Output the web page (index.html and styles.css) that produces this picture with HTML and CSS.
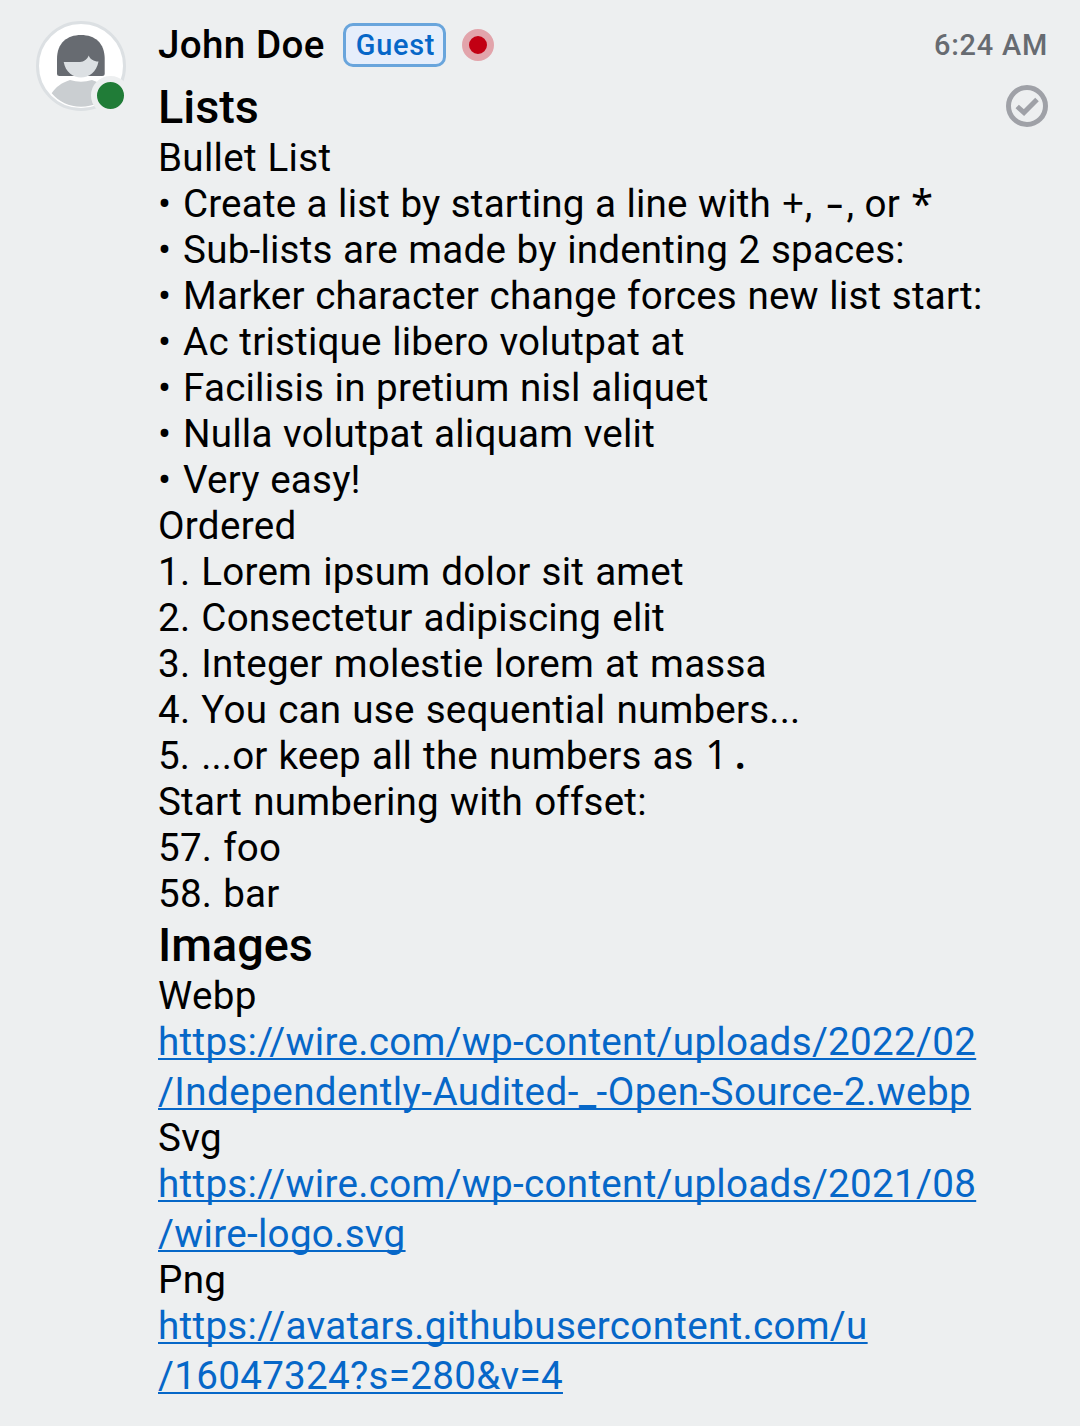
FILE: index.html
```html
<!DOCTYPE html>
<html lang="en">
<head>
<meta charset="utf-8">
<title>Conversation</title>
<link rel="stylesheet" href="styles.css">
</head>
<body>
<article class="message">
  <div class="avatar">
    <svg class="avatar-image" width="90" height="90" viewBox="0 0 90 90">
      <circle cx="45" cy="45" r="43.5" fill="#fff" stroke="#dce0e3" stroke-width="3"/>
      <path d="M15.7 72.3C20 66 25 62 34 59Q45 62.5 56 59C65 62 70 66 74.3 72.3C67 81 57 85.7 45 85.7S23 81 15.7 72.3Z" fill="#caced1"/>
      <path d="M21 52.5V38C21 22 31 14 45 14S68.7 22 68.7 38V52.5Q68.7 55 66.2 55H23.5Q21 55 21 52.5Z" fill="#676b71"/>
      <path d="M27.7 41H44C48 41 51.5 38 52.7 34.5C54 38 57.5 40.5 62.5 40.5C60.5 51 53 56.5 45 56.5S29.5 51 27.7 41Z" fill="#dce0e3"/>
    </svg>
    <span class="presence"></span>
  </div>
  <div class="body">
    <header class="header">
      <span class="name">John Doe</span>
      <span class="guest">Guest</span>
      <span class="hold"></span>
      <time class="time">6:24 AM</time>
    </header>
    <div class="heading-row">
      <h2>Lists</h2>
      <svg class="delivered" width="42" height="42" viewBox="0 0 42 42" fill="none" stroke="#9fa1a7" stroke-width="5"><circle cx="21" cy="21" r="18.5"/><path d="M11.2 21.5L18 27.5L31 14.5"/></svg>
    </div>
    <p>Bullet List</p>
    <p class="item syntax"><span class="bullet">•</span> Create a list by starting a line with <code>+</code>, <code class="dash">-</code>, or <code class="star">*</code></p>
    <p class="item"><span class="bullet">•</span> Sub-lists are made by indenting 2 spaces:</p>
    <p class="item"><span class="bullet">•</span> Marker character change forces new list start:</p>
    <p class="item"><span class="bullet">•</span> Ac tristique libero volutpat at</p>
    <p class="item"><span class="bullet">•</span> Facilisis in pretium nisl aliquet</p>
    <p class="item"><span class="bullet">•</span> Nulla volutpat aliquam velit</p>
    <p class="item"><span class="bullet">•</span> Very easy!</p>
    <p>Ordered</p>
    <p class="step">1. Lorem ipsum dolor sit amet</p>
    <p class="step">2. Consectetur adipiscing elit</p>
    <p class="step">3. Integer molestie lorem at massa</p>
    <p class="step">4. You can use sequential numbers...</p>
    <p class="step literal">5. ...or keep all the numbers as <code>1</code><code class="dot">.</code></p>
    <p class="step">Start numbering with offset:</p>
    <p class="step">57. foo</p>
    <p class="step">58. bar</p>
    <h2>Images</h2>
    <p>Webp</p>
    <a href="#">https://wire.com/wp-content/uploads/2022/02<br><span class="wide">/Independently-Audited-_-Open-Source-2.webp</span></a>
    <p>Svg</p>
    <a href="#">https://wire.com/wp-content/uploads/2021/08<br>/wire-logo.svg</a>
    <p>Png</p>
    <a href="#">https://avatars.githubusercontent.com/u<br>/16047324?s=280&amp;v=4</a>
  </div>
</article>
</body>
</html>
```
FILE: styles.css
```css
* { box-sizing: border-box; }
body { margin: 0; background: #edeff0; color: #000; font: 400 38.6px/46px Roboto, sans-serif; letter-spacing: 0.3px; word-spacing: 0.7px; }
.message { display: flex; height: 1426px; padding: 21px 32px 0 36px; overflow: hidden; }
.avatar { position: relative; flex: none; width: 90px; height: 90px; margin-right: 32px; }
.avatar-image { display: block; }
.presence { position: absolute; left: 55px; top: 55px; width: 39px; height: 39px; border: 6px solid #edeff0; border-radius: 50%; background: #207c37; }
.body { flex: 1; min-width: 0; }
.header { display: flex; align-items: center; height: 48px; }
.name { width: 167px; font-weight: 500; white-space: nowrap; }
.guest { width: 103px; height: 44px; margin-left: 18px; padding-left: 2px; border: 3px solid #69a5dc; border-radius: 10px; background: #e6eefb; color: #0667c8; font-size: 28.9px; font-weight: 500; line-height: 38px; letter-spacing: 0.75px; text-align: center; }
.hold { width: 32px; height: 32px; margin-left: 16px; border: 7px solid #e2a4ab; border-radius: 50%; background: #c20013; }
.time { margin-left: auto; color: #676b71; font-size: 28.9px; letter-spacing: 0.8px; word-spacing: 0; font-weight: 500; }
.heading-row { display: flex; justify-content: space-between; }
.delivered { margin-top: 16px; }
h2, p { margin: 0; white-space: nowrap; }
p { height: 46px; }
h2 { height: 66px; padding-top: 10px; font-size: 46.8px; font-weight: 500; line-height: 56px; letter-spacing: 0; }
p + h2 { height: 56px; padding-top: 0; }
.item { letter-spacing: 0.2px; }
.syntax { letter-spacing: 0.18px; word-spacing: 0.55px; }
.step { letter-spacing: 0.2px; word-spacing: 1.3px; }
.literal { letter-spacing: 0.15px; }
.wide { letter-spacing: 0.44px; }
.bullet { margin-right: 1.4px; }
code { display: inline-block; width: 23.6px; font: 39.375px/1 "Noto Sans", sans-serif; letter-spacing: 0; word-spacing: 0; text-align: center; }
.dash { transform: scaleX(1.45); }
.star { font-size: 40px; transform: translateY(1px); }
.dot { font-weight: 600; }
a { display: block; color: #0667c8; line-height: 50px; height: 98px; margin: -2px 0 0; text-decoration-thickness: 2px; text-underline-offset: 3px; text-decoration-skip-ink: none; }
```
